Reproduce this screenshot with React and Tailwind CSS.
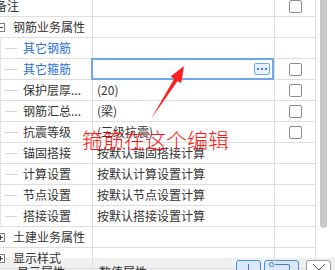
import React from "react";

const FONT = { fontFamily: '"Noto Sans CJK SC", "Noto Sans", sans-serif' };

const rows = [
  { type: "plain", label: "备注", check: true },
  { type: "group", label: "钢筋业务属性", open: true },
  { type: "child", label: "其它钢筋", blue: true },
  { type: "child", label: "其它箍筋", blue: true, editing: true, check: true },
  { type: "child", label: "保护层厚...", value: "(20)", check: true },
  { type: "child", label: "钢筋汇总...", value: "(梁)", check: true },
  { type: "child", label: "抗震等级", value: "(三级抗震)", check: true },
  { type: "child", label: "锚固搭接", value: "按默认锚固搭接计算" },
  { type: "child", label: "计算设置", value: "按默认计算设置计算" },
  { type: "child", label: "节点设置", value: "按默认节点设置计算" },
  { type: "child", label: "搭接设置", value: "按默认搭接设置计算" },
  { type: "group", label: "土建业务属性" },
  { type: "group", label: "显示样式" },
];

function Checkbox() {
  return <span className="block w-[13px] h-[13px] border border-[#8c8c8c] rounded-[2px] bg-white" />;
}

function Toggle({ open }) {
  return (
    <span className="flex items-center justify-center w-[9px] h-[9px] border border-[#7a7a7a] bg-white -ml-[4px] mr-[8px] shrink-0">
      <span className="relative block w-[5px] h-px bg-[#444]">
        {!open && <span className="absolute left-[2px] -top-[2px] w-px h-[5px] bg-[#444]" />}
      </span>
    </span>
  );
}

function Row({ row }) {
  return (
    <div className="flex h-[21px] border-b border-[#dedede]">
      <div className="w-[93px] border-r border-[#dedede] flex items-center overflow-hidden whitespace-nowrap">
        {row.type === "plain" && <span className="-ml-[5px] text-[#333]">{row.label}</span>}
        {row.type === "group" && (
          <>
            <Toggle open={row.open} />
            <span className="text-[#333]">{row.label}</span>
          </>
        )}
        {row.type === "child" && (
          <>
            <span className="self-stretch border-l border-[#e4e4e4]" />
            <span className="w-[12px] h-px bg-[#d4d4d4] ml-[4px] mr-[6px] shrink-0" />
            <span className={row.blue ? "text-[#2a6fd8]" : "text-[#333]"}>{row.label}</span>
          </>
        )}
      </div>
      <div className="relative w-[182px] border-r border-[#dedede] flex items-center pl-[4px] whitespace-nowrap text-[#333]">
        {row.value}
        {row.editing && (
          <div className="absolute -left-[2px] -top-px right-0 -bottom-px border-2 border-[#6ea8e8] flex items-center justify-end pr-[2px]">
            <span className="flex items-center justify-center gap-[2px] w-[16px] h-[12px] rounded-[2px] border border-[#6ea8e8] bg-[#e8f1fc]">
              <span className="w-[2px] h-[2px] bg-[#3b82e0]" />
              <span className="w-[2px] h-[2px] bg-[#3b82e0]" />
              <span className="w-[2px] h-[2px] bg-[#3b82e0]" />
            </span>
          </div>
        )}
      </div>
      <div className="w-[41px] border-r border-[#dedede] flex items-center justify-center">
        {row.check && <Checkbox />}
      </div>
    </div>
  );
}

export default function App() {
  return (
    <div className="relative w-[335px] h-[270px] overflow-hidden bg-white text-[12px] leading-none" style={FONT}>
      <div className="flex h-[258px]">
        <div className="w-[316px] -mt-[4px]">
          {rows.map((row, i) => (
            <Row key={i} row={row} />
          ))}
        </div>
        <div className="pl-[4px] pt-0">
          <div className="w-[7px] h-[228px] bg-[#c9c9c9] rounded-b-[4px]" />
        </div>
      </div>

      {/* 底部工具栏 */}
      <div className="flex items-start h-[12px] bg-[#f0f0f0] overflow-hidden">
        <span className="ml-[17px] mt-[8px] text-[#333]">显示属性</span>
        <span className="ml-[34px] mt-[8px] text-[#333]">数值属性</span>
        <div className="ml-auto mr-[4px] mt-[2px] flex gap-[3px]">
          <span className="flex justify-center w-[25px] h-[14px] rounded-[3px] border border-[#4a90e2] bg-[#dbe9fa]">
            <span className="mt-[3px] w-px h-[9px] bg-[#3b7fd6]" />
          </span>
          <span className="flex items-start w-[35px] h-[14px] rounded-[3px] border border-[#4a90e2] bg-[#dbe9fa] pl-[4px] pt-[1px]">
            <span className="w-[5px] h-[5px] rounded-full border border-[#3b7fd6]" />
            <span className="mt-[2px] w-[16px] h-[6px] border-t border-r border-[#3b7fd6] rounded-tr-[2px]" />
          </span>
          <span className="relative ml-[4px] w-[25px] h-[14px] rounded-[3px] border border-[#9a9a9a] bg-white overflow-hidden">
            <svg width="25" height="14" className="absolute left-0 top-0">
              <path d="M6 3 L12 9 L18 3" stroke="#555" strokeWidth="1" fill="none" />
            </svg>
          </span>
        </div>
      </div>

      {/* 标注 */}
      <svg className="absolute left-0 top-0 pointer-events-none" width="335" height="270">
        <polygon points="151,119 174.2,78.7 170.6,76.4 184,66 181.2,83.2 177.6,80.9" fill="#ff1f1f" />
      </svg>
      <div
        className="absolute left-[82px] top-[129px] text-[21px] leading-none text-[#ff1a1a] whitespace-nowrap pointer-events-none"
        style={{ ...FONT, fontWeight: 300 }}
      >
        箍筋在这个编辑
      </div>
    </div>
  );
}
